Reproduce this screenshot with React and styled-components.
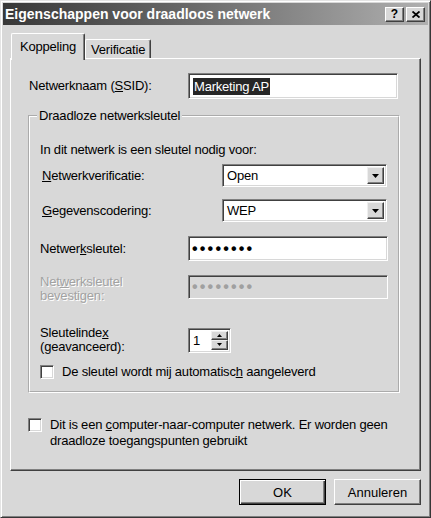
import React from "react";
import styled, { createGlobalStyle } from "styled-components";

const FACE = "#d8d8d8";

const GlobalStyle = createGlobalStyle`
  html, body {
    margin: 0;
    padding: 0;
    background: ${FACE};
  }
  body {
    font-family: "Liberation Sans", Arial, sans-serif;
    font-size: 13px;
    letter-spacing: -0.2px;
    color: #000;
  }
`;

const Window = styled.div`
  box-sizing: border-box;
  width: 431px;
  height: 518px;
  display: flex;
  flex-direction: column;
  background: ${FACE};
  border: 1px solid;
  border-color: #e4e4e4 #363636 #363636 #e4e4e4;
  box-shadow: inset 1px 1px #fff, inset -1px -1px #808080;
  padding: 2px;
`;

const TitleBar = styled.div`
  flex: none;
  height: 22px;
  display: flex;
  align-items: center;
  padding: 0 3px 0 2px;
  background: linear-gradient(to right, #383838 0%, #6a6a6a 45%, #b0b0b0 100%);
`;

const Title = styled.div`
  flex: 1;
  color: #fff;
  font-weight: bold;
  font-size: 14px;
  letter-spacing: 0;
  white-space: nowrap;
`;

const CaptionButton = styled.div`
  box-sizing: border-box;
  width: 19px;
  height: 15px;
  margin-left: ${p => p.$gap || 0}px;
  display: flex;
  align-items: center;
  justify-content: center;
  background: ${FACE};
  border: 1px solid;
  border-color: #fff #404040 #404040 #fff;
  box-shadow: inset -1px -1px #808080;
  font-weight: bold;
  font-size: 12px;
  letter-spacing: 0;
`;

const Body = styled.div`
  flex: 1;
  display: flex;
  flex-direction: column;
  padding: 8px 7px 0 7px;
`;

const TabStrip = styled.div`
  display: flex;
  align-items: flex-end;
  padding-left: 1px;
  position: relative;
  z-index: 1;
`;

const Tab = styled.div`
  box-sizing: border-box;
  display: flex;
  align-items: center;
  height: ${p => (p.$active ? 27 : 19)}px;
  margin-bottom: ${p => (p.$active ? -2 : 0)}px;
  padding: 0 ${p => (p.$active ? 8 : 5)}px ${p => (p.$active ? 2 : 0)}px;
  background: ${FACE};
  border: 1px solid;
  border-bottom: none;
  border-color: #fff #404040 #404040 #fff;
  border-radius: 2px 2px 0 0;
  box-shadow: inset -1px 0 #808080;
  white-space: nowrap;
`;

const Panel = styled.div`
  box-sizing: border-box;
  height: 413px;
  flex: none;
  border: 1px solid;
  border-color: #fff #404040 #404040 #fff;
  box-shadow: inset -1px -1px #808080;
  padding: 14px 21px 0 17px;
`;

const Row = styled.div`
  display: flex;
  align-items: ${p => p.$align || "center"};
  height: ${p => p.$h}px;
  margin-top: ${p => p.$mt || 0}px;
`;

const Label = styled.div`
  box-sizing: border-box;
  flex: none;
  width: ${p => p.$w}px;
  padding-left: ${p => p.$indent || 0}px;
  line-height: 14px;
  color: ${p => (p.$disabled ? "#a2a2a2" : "#000")};
  text-shadow: ${p => (p.$disabled ? "1px 1px 0 #fff" : "none")};
`;

const Field = styled.div`
  box-sizing: border-box;
  flex: none;
  display: flex;
  align-items: center;
  width: ${p => p.$w}px;
  height: ${p => p.$h}px;
  padding: 2px 2px 2px 3px;
  background: ${p => (p.$disabled ? FACE : "#fff")};
  border: 1px solid;
  border-color: #808080 #fff #fff #808080;
  box-shadow: inset 1px 1px #404040, inset -1px -1px ${FACE};
  overflow: hidden;
  white-space: nowrap;
`;

const FieldText = styled.span`
  flex: 1;
  padding-left: 1px;
`;

const Selected = styled.span`
  background: #262626;
  color: #fff;
  padding: 1px 1px;
`;

const Dots = styled.span`
  flex: 1;
  font-size: 16px;
  font-weight: bold;
  letter-spacing: 2.2px;
  line-height: 14px;
  color: ${p => (p.$disabled ? "#a0a0a0" : "#000")};
`;

const Raised = styled.div`
  box-sizing: border-box;
  display: flex;
  align-items: center;
  justify-content: center;
  background: ${FACE};
  border: 1px solid;
  border-color: #efefef #404040 #404040 #efefef;
  box-shadow: inset -1px -1px #808080;
`;

const DropButton = styled(Raised)`
  flex: none;
  width: 17px;
  height: 100%;
`;

const SpinColumn = styled.div`
  flex: none;
  width: 17px;
  height: 100%;
  display: flex;
  flex-direction: column;
`;

const SpinButton = styled(Raised)`
  flex: 1;
`;

const Group = styled.fieldset`
  box-sizing: border-box;
  width: 371px;
  margin: 10px 0 0 0;
  padding: 0 10px 11px 10px;
  border: 2px groove #fff;
`;

const Legend = styled.legend`
  margin-left: -3px;
  padding: 0 2px;
  line-height: 14px;
`;

const Intro = styled.div`
  height: 15px;
  line-height: 15px;
  margin-top: 19px;
`;

const CheckRow = styled.div`
  display: flex;
  align-items: flex-start;
  gap: ${p => p.$gap}px;
  margin-top: ${p => p.$mt}px;
  line-height: 16px;
`;

const Check = styled.span`
  box-sizing: border-box;
  flex: none;
  width: 14px;
  height: 14px;
  margin-top: 1px;
  background: #fff;
  border: 1px solid;
  border-color: #808080 #fff #fff #808080;
  box-shadow: inset 1px 1px #404040, inset -1px -1px ${FACE};
`;

const ButtonRow = styled.div`
  display: flex;
  justify-content: flex-end;
  gap: 8px;
  margin-top: 8px;
`;

const PushButton = styled.button`
  box-sizing: border-box;
  width: 87px;
  height: 26px;
  padding: 0;
  font: inherit;
  color: #000;
  background: ${FACE};
  border: 1px solid;
  border-color: ${p => (p.$default ? "#000" : "#fff #404040 #404040 #fff")};
  box-shadow: ${p =>
    p.$default
      ? "inset 1px 1px #fff, inset -1px -1px #404040, inset -2px -2px #808080"
      : "inset -1px -1px #808080"};
`;

const Arrow = ({ up, w = 7 }) => (
  <svg width={w} height={Math.ceil(w / 2)} viewBox={`0 0 ${w} ${Math.ceil(w / 2)}`}>
    <polygon
      points={
        up
          ? `0,${Math.ceil(w / 2)} ${w},${Math.ceil(w / 2)} ${w / 2},0`
          : `0,0 ${w},0 ${w / 2},${Math.ceil(w / 2)}`
      }
      fill="#000"
    />
  </svg>
);

const Select = ({ value }) => (
  <Field $w={165} $h={23}>
    <FieldText>{value}</FieldText>
    <DropButton>
      <Arrow w={7} />
    </DropButton>
  </Field>
);

export default function App() {
  return (
    <>
      <GlobalStyle />
      <Window>
        <TitleBar>
          <Title>Eigenschappen voor draadloos netwerk</Title>
          <CaptionButton>?</CaptionButton>
          <CaptionButton $gap={2}>
            <svg width="8" height="7" viewBox="0 0 8 7">
              <path d="M0.5 0.5 L7.5 6.5 M7.5 0.5 L0.5 6.5" stroke="#000" strokeWidth="1.8" />
            </svg>
          </CaptionButton>
        </TitleBar>

        <Body>
          <TabStrip>
            <Tab $active>Koppeling</Tab>
            <Tab>Verificatie</Tab>
          </TabStrip>

          <Panel>
            <Row $h={26}>
              <Label $w={160} $indent={1}>
                Netwerknaam (<u>S</u>SID):
              </Label>
              <Field $w={210} $h={26}>
                <FieldText>
                  <Selected>Marketing AP</Selected>
                </FieldText>
              </Field>
            </Row>

            <Group>
              <Legend>Draadloze netwerksleutel</Legend>
              <Intro>In dit netwerk is een sleutel nodig voor:</Intro>

              <Row $h={23} $mt={7}>
                <Label $w={182} $indent={2}>
                  <u>N</u>etwerkverificatie:
                </Label>
                <Select value="Open" />
              </Row>

              <Row $h={23} $mt={12}>
                <Label $w={182} $indent={2}>
                  <u>G</u>egevenscodering:
                </Label>
                <Select value="WEP" />
              </Row>

              <Row $h={25} $mt={14}>
                <Label $w={148}>
                  Netwer<u>k</u>sleutel:
                </Label>
                <Field $w={200} $h={25}>
                  <Dots>••••••••</Dots>
                </Field>
              </Row>

              <Row $h={28} $mt={14} $align="flex-start">
                <Label $w={148} $disabled>
                  Net<u>w</u>erksleutel
                  <br />
                  bevestigen:
                </Label>
                <Field $w={200} $h={24} $disabled>
                  <Dots $disabled>••••••••</Dots>
                </Field>
              </Row>

              <Row $h={26} $mt={24}>
                <Label $w={148}>
                  Sleutelinde<u>x</u>
                  <br />
                  (geavanceerd):
                </Label>
                <Field $w={43} $h={25}>
                  <FieldText>1</FieldText>
                  <SpinColumn>
                    <SpinButton>
                      <Arrow up w={5} />
                    </SpinButton>
                    <SpinButton>
                      <Arrow w={5} />
                    </SpinButton>
                  </SpinColumn>
                </Field>
              </Row>

              <CheckRow $gap={8} $mt={11}>
                <Check />
                <span>
                  De sleutel wordt mij automatisc<u>h</u> aangeleverd
                </span>
              </CheckRow>
            </Group>

            <CheckRow $gap={8} $mt={24}>
              <Check />
              <span>
                Dit is een <u>c</u>omputer-naar-computer netwerk. Er worden geen
                <br />
                draadloze toegangspunten gebruikt
              </span>
            </CheckRow>
          </Panel>

          <ButtonRow>
            <PushButton $default>OK</PushButton>
            <PushButton>Annuleren</PushButton>
          </ButtonRow>
        </Body>
      </Window>
    </>
  );
}
